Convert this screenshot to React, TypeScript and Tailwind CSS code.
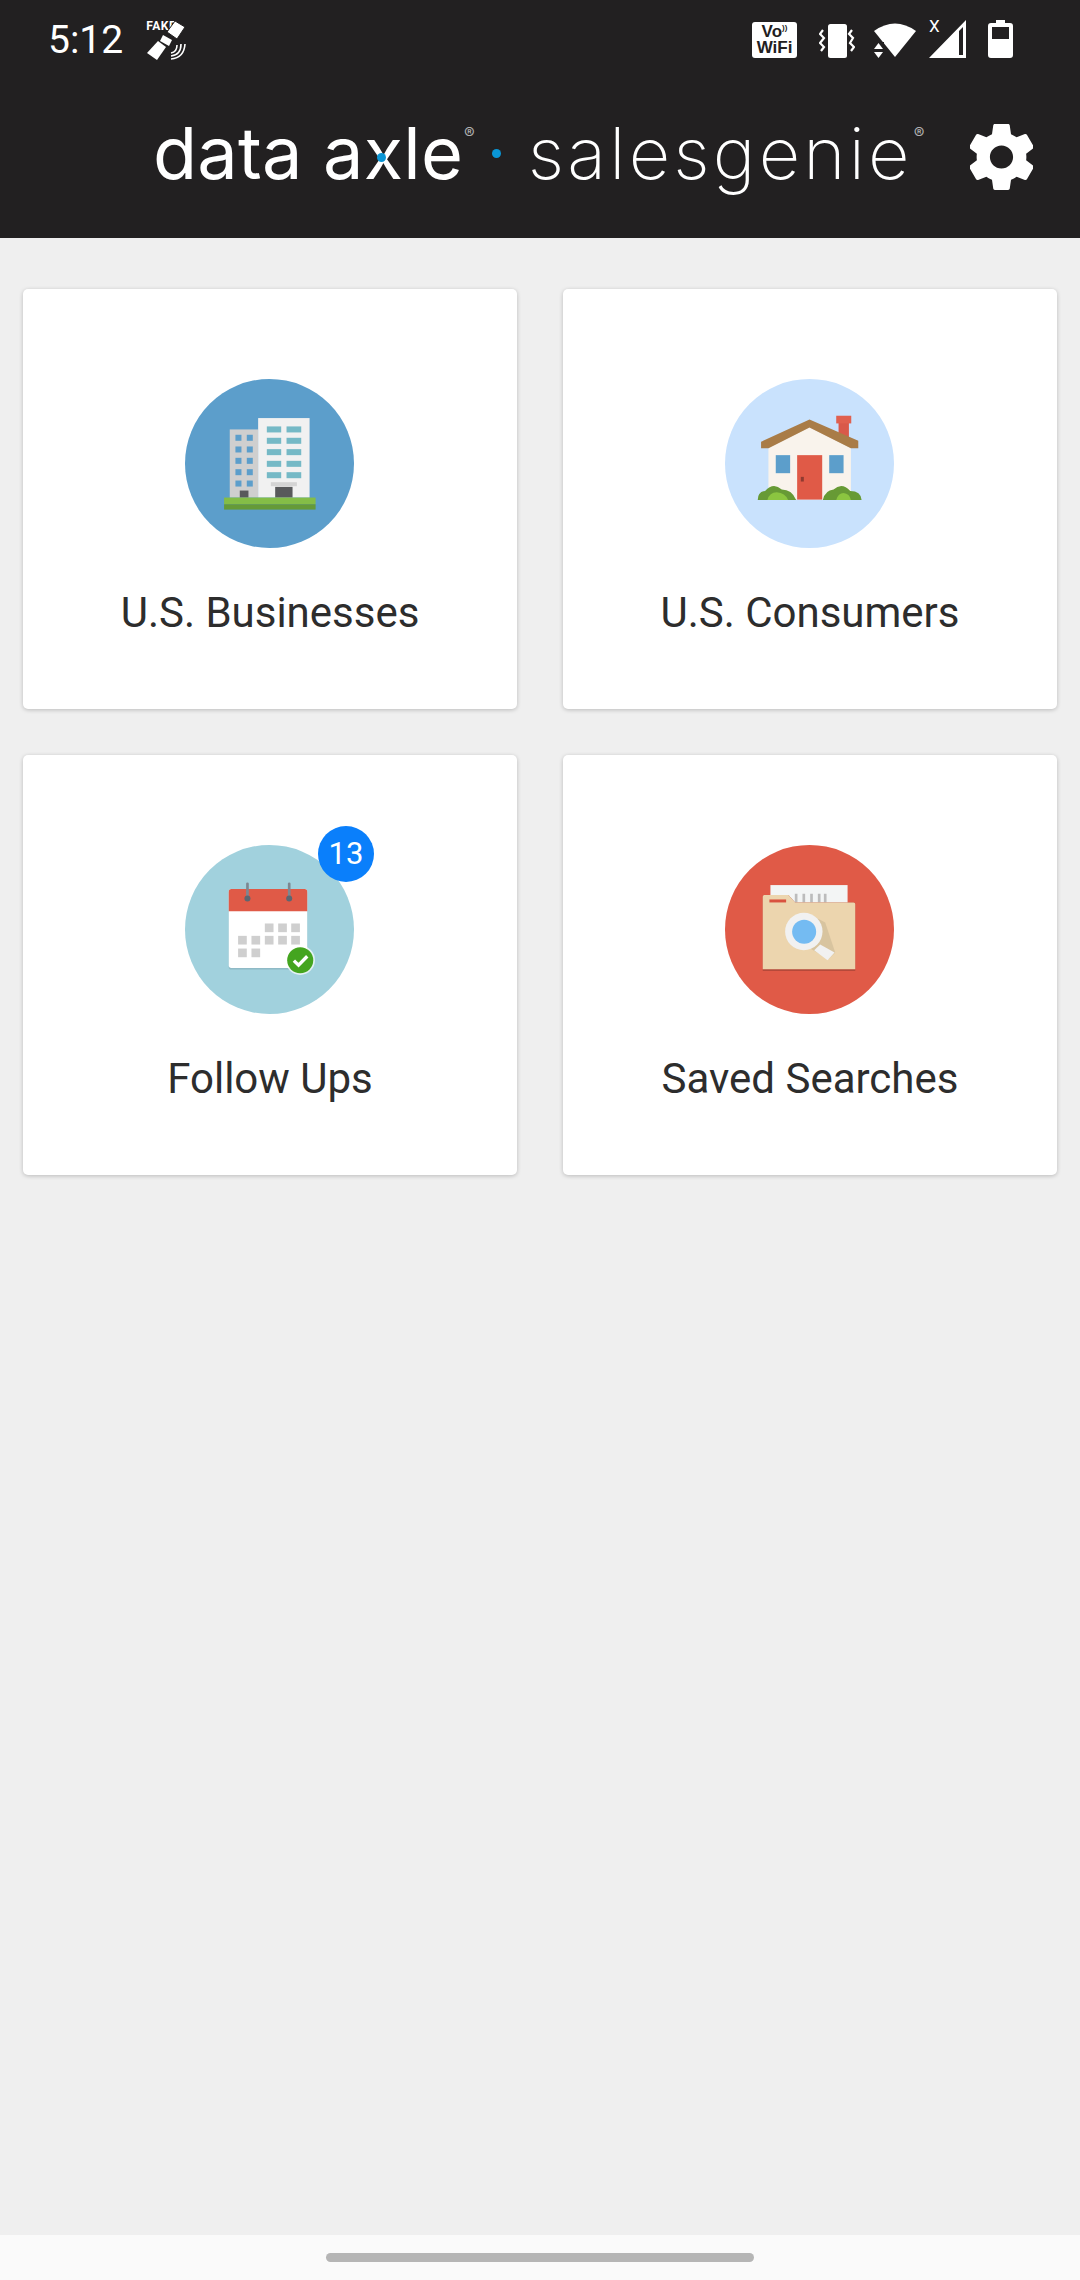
import React from 'react'

const Satellite = () => (
  <div className="relative w-[42px] h-[40px]">
    <span className="absolute left-0 top-0 text-[12px] leading-[12px] font-bold text-white font-['Roboto',sans-serif] tracking-[0.5px]">FAKE</span>
    <svg viewBox="0 0 42 40" className="absolute inset-0 w-[42px] h-[40px]" fill="white">
      <polygon points="29,1 39,7 31,19 21,12" stroke="#222021" strokeWidth="1" />
      <polygon points="17,15 26,20 23,26 14,21" />
      <polygon points="12,21 20,27 11,40 1,33" />
      <g fill="none" stroke="white" strokeWidth="1.6">
        <path d="M25 33 Q31 32 31 25" />
        <path d="M25 36 Q35 35 35 24" />
        <path d="M25 39 Q38 38 39 24" />
      </g>
    </svg>
  </div>
)

const VoWifi = () => (
  <div className="w-[45px] h-[36px] bg-white rounded-[3px] flex flex-col items-center justify-center font-['Liberation_Sans',sans-serif] font-bold text-[#222021] text-[17px] leading-[16px]">
    <span>Vo<span className="text-[8px] align-top leading-[8px]">))</span></span>
    <span>WiFi</span>
  </div>
)

const Vibrate = () => (
  <svg viewBox="0 0 36 34" className="w-[36px] h-[34px]" fill="none">
    <rect x="9" y="0" width="19" height="34" rx="2.5" fill="white" />
    <path d="M4 6 L1 10 L5 14 L1 19 L5 23 L2 27" stroke="white" strokeWidth="2.2" />
    <path d="M33 6 L30 10 L34 14 L31 19 L35 23 L32 27" stroke="white" strokeWidth="2.2" />
  </svg>
)

const WifiIcon = () => (
  <svg viewBox="0 0 42 36" className="w-[42px] h-[36px]" fill="white">
    <path d="M0 9 Q21 -6 42 9 L21 35 Z" />
    <rect x="0" y="20" width="10" height="16" fill="#222021" />
    <polygon points="0,27 9,27 4.5,21" />
    <polygon points="0,30 9,30 4.5,36" />
  </svg>
)

const SignalIcon = () => (
  <div className="relative w-[38px] h-[38px]">
    <svg viewBox="0 0 38 38" className="w-[38px] h-[38px]" fill="white">
      <path fillRule="evenodd" d="M0 38 L37 0 L37 38 Z M30 11 L30 35 L34 35 L34 7 Z" />
    </svg>
    <span className="absolute left-0 -top-[1px] text-[17px] leading-[15px] text-white font-['Roboto',sans-serif]">X</span>
  </div>
)

const Battery = () => (
  <svg viewBox="0 0 25 38" className="w-[25px] h-[38px]" fill="white">
    <path fillRule="evenodd" d="M8 0 H17 V3 H22 Q25 3 25 6 V35 Q25 38 22 38 H3 Q0 38 0 35 V6 Q0 3 3 3 H8 Z M4 7 V19 H21 V7 Z" />
  </svg>
)

const Gear = () => (
  <svg viewBox="2.5 2 19 20" className="w-[63px] h-[66px]" preserveAspectRatio="none" fill="white">
    <path d="M19.43 12.98c.04-.32.07-.64.07-.98s-.03-.66-.07-.98l2.11-1.65c.19-.15.24-.42.12-.64l-2-3.46c-.12-.22-.39-.3-.61-.22l-2.49 1c-.52-.4-1.08-.73-1.69-.98l-.38-2.65C14.46 2.18 14.25 2 14 2h-4c-.25 0-.46.18-.49.42l-.38 2.65c-.61.25-1.17.59-1.69.98l-2.49-1c-.23-.09-.49 0-.61.22l-2 3.46c-.13.22-.07.49.12.64l2.11 1.65c-.04.32-.07.65-.07.98s.03.66.07.98l-2.11 1.65c-.19.15-.24.42-.12.64l2 3.46c.12.22.39.3.61.22l2.49-1c.52.4 1.08.73 1.69.98l.38 2.65c.03.24.24.42.49.42h4c.25 0 .46-.18.49-.42l.38-2.65c.61-.25 1.17-.59 1.69-.98l2.49 1c.23.09.49 0 .61-.22l2-3.46c.12-.22.07-.49-.12-.64l-2.11-1.65zM12 15.5c-1.93 0-3.5-1.57-3.5-3.5s1.57-3.5 3.5-3.5 3.5 1.57 3.5 3.5-1.57 3.5-3.5 3.5z" />
  </svg>
)

const Logo = () => (
  <div className="w-[817px] flex items-baseline text-white font-['Inter',sans-serif] whitespace-nowrap pb-[8px]">
    <span className="text-[72px] leading-[72px] font-normal tracking-[0.2px]">
      data a<span className="relative">x<span className="absolute left-1/2 top-[50%] -ml-[6px] w-[9px] h-[9px] rounded-full bg-[#0a96d6]" /></span>le
    </span>
    <span className="self-start mt-[8px] ml-[1px] text-[16px] leading-[16px] text-[#b0b0b0]">®</span>
    <span className="w-[9px] h-[9px] rounded-full bg-[#0a96d6] ml-[17px] mr-[27px] self-center" />
    <span className="text-[72px] leading-[72px] font-[250] tracking-[3.2px]">salesgenie</span>
    <span className="self-start mt-[8px] ml-[1px] text-[16px] leading-[16px] text-[#b0b0b0]">®</span>
  </div>
)

const BuildingArt = () => (
  <svg viewBox="45 27 506 506" className="w-full h-full">
    <circle cx="298" cy="280" r="253" fill="#5c9ecb" />
    <rect x="179" y="178" width="85" height="204" fill="#cfcfcf" />
    {[194, 229, 263, 297, 331].map((y) => (
      <g key={y} fill="#5c9ecb">
        <rect x="196" y={y} width="18" height="18" />
        <rect x="230" y={y} width="18" height="18" />
      </g>
    ))}
    <rect x="209" y="361" width="26" height="21" fill="#58595b" />
    <rect x="264" y="144" width="154" height="238" fill="#f1f1f1" />
    {[169, 203, 237, 272, 306].map((y) => (
      <g key={y} fill="#75b9c6">
        <rect x="290" y={y} width="43" height="18" />
        <rect x="349" y={y} width="44" height="18" />
      </g>
    ))}
    <rect x="302" y="336" width="78" height="12" fill="#d4d4d4" />
    <rect x="315" y="350" width="52" height="32" fill="#58595b" />
    <rect x="162" y="382" width="274" height="20" fill="#84bd47" />
    <rect x="162" y="402" width="274" height="16" fill="#659a38" />
  </svg>
)

const HouseArt = () => (
  <svg viewBox="45 27 506 506" className="w-full h-full">
    <circle cx="298" cy="280" r="253" fill="#c9e2fd" />
    <rect x="385" y="155" width="31" height="55" fill="#d9594a" />
    <rect x="378" y="137" width="45" height="23" fill="#e0604f" />
    <polygon points="175,234 298,168 422,234 422,388 175,388" fill="#f9f3ec" />
    <polygon points="175,234 298,172 422,234 422,226 298,160 175,226" fill="#e0d4c8" />
    <polygon points="153,215 298,148 444,212 444,234 422,234 298,172 175,234 153,234" fill="#a97c47" />
    <rect x="197" y="255" width="43" height="54" fill="#5c9ecb" />
    <rect x="357" y="255" width="43" height="54" fill="#5c9ecb" />
    <rect x="261" y="255" width="75" height="133" fill="#e05a47" />
    <rect x="272" y="320" width="9" height="14" fill="#8f3a30" />
    <g fill="#679a35">
      <path d="M143 389 Q143 365 165 362 Q190 335 215 358 Q245 358 258 389 Z" />
      <path d="M338 389 Q345 360 370 358 Q395 335 420 362 Q452 362 454 389 Z" />
    </g>
    <g fill="#8bc540">
      <path d="M172 389 Q178 366 200 366 Q225 368 234 389 Z" />
      <path d="M378 389 Q384 368 400 368 Q418 370 422 389 Z" />
    </g>
  </svg>
)

const CalendarArt = () => (
  <svg viewBox="45 90 506 506" className="w-full h-full">
    <circle cx="298" cy="343" r="253" fill="#a1d1dd" />
    <rect x="176" y="226" width="235" height="237" rx="8" fill="#8fbac6" />
    <rect x="176" y="222" width="235" height="236" rx="8" fill="#ffffff" />
    <path d="M176 288 V230 Q176 222 184 222 H403 Q411 222 411 230 V288 Z" fill="#e05a47" />
    <g stroke="#7d8791" strokeWidth="8" strokeLinecap="round">
      <line x1="232" y1="206" x2="232" y2="250" />
      <line x1="357" y1="206" x2="357" y2="250" />
    </g>
    <circle cx="232" cy="250" r="9" fill="#5d6670" />
    <circle cx="357" cy="250" r="9" fill="#5d6670" />
    <g fill="#cfcfcf">
      {[284, 324, 363].map((x) => <rect key={x} x={x} y="325" width="26" height="26" />)}
      {[204, 244, 284, 324, 363].map((x) => <rect key={x} x={x} y="362" width="26" height="26" />)}
      {[204, 244].map((x) => <rect key={x} x={x} y="400" width="26" height="26" />)}
    </g>
    <circle cx="390" cy="435" r="44" fill="#ffffff" fillOpacity="0.7" />
    <circle cx="390" cy="435" r="39" fill="#44a51f" />
    <path d="M371 436 L385 450 L411 423" fill="none" stroke="white" strokeWidth="10" />
  </svg>
)

const FolderArt = () => (
  <svg viewBox="45 30 506 506" className="w-full h-full">
    <circle cx="298" cy="283" r="253" fill="#e05a47" />
    <rect x="181" y="150" width="231" height="80" fill="#f3f5f5" />
    <g fill="#bcbcbc">
      {[254, 277, 300, 323, 341].map((x) => <rect key={x} x={x} y="176" width="8" height="26" />)}
    </g>
    <path d="M158 185 Q158 180 163 180 H235 L255 202 H430 Q435 202 435 207 V407 H158 Z" fill="#b5493a" />
    <path d="M158 185 Q158 180 163 180 H235 L255 202 H430 Q435 202 435 207 V402 H158 Z" fill="#ecd5ae" />
    <rect x="178" y="193" width="50" height="9" fill="#d9523f" />
    <polygon points="300,238 345,262 375,352 355,372 300,340" fill="#d8c49f" />
    <polygon points="330,328 373,352 352,375 312,345" fill="#f1f1f1" />
    <circle cx="281" cy="289" r="56" fill="#f1f1f1" />
    <circle cx="282" cy="290" r="36" fill="#74bbf2" />
  </svg>
)

type Tile = { label: string; art: React.ReactNode; badge?: string }

const tiles: Tile[] = [
  { label: 'U.S. Businesses', art: <BuildingArt /> },
  { label: 'U.S. Consumers', art: <HouseArt /> },
  { label: 'Follow Ups', art: <CalendarArt />, badge: '13' },
  { label: 'Saved Searches', art: <FolderArt /> },
]

export default function App() {
  return (
    <div className="w-[1080px] h-[2280px] bg-[#efefef] flex flex-col font-['Roboto',sans-serif]">
      <header className="h-[238px] bg-[#222021] flex flex-col">
        <div className="h-[76px] flex items-start justify-between pl-[48px] pr-[67px] pt-[20px]">
          <div className="flex items-center gap-[23px]">
            <span className="text-white text-[39px] leading-[40px]">5:12</span>
            <Satellite />
          </div>
          <div className="flex items-end h-[38px]">
            <VoWifi />
            <div className="ml-[22px]"><Vibrate /></div>
            <div className="ml-[19px]"><WifiIcon /></div>
            <div className="ml-[13px]"><SignalIcon /></div>
            <div className="ml-[21px]"><Battery /></div>
          </div>
        </div>
        <div className="flex-1 flex items-center pl-[153px]">
          <Logo />
          <Gear />
        </div>
      </header>

      <main className="flex-1 grid grid-cols-2 gap-x-[46px] gap-y-[46.5px] px-[23px] pt-[51px] auto-rows-[419.5px]">
        {tiles.map((tile) => (
          <div key={tile.label} className="bg-white rounded-[5px] shadow-[0_1px_4px_rgba(0,0,0,0.22)] flex flex-col items-center pt-[90px]">
            <div className="relative w-[169px] h-[169px] mr-[1px]">
              {tile.art}
              {tile.badge && (
                <span className="absolute left-[133px] -top-[19px] w-[56px] h-[56px] rounded-full bg-[#0a7ffb] text-white text-[31px] flex items-center justify-center">{tile.badge}</span>
              )}
            </div>
            <span className="mt-[41px] text-[42px] leading-[48px] text-[#2d2d2d]">{tile.label}</span>
          </div>
        ))}
      </main>

      <div className="h-[45px] bg-[#fafafa] flex items-start justify-center pt-[18px]">
        <div className="w-[428px] h-[9px] rounded-full bg-[#b5b5b5]" />
      </div>
    </div>
  )
}
